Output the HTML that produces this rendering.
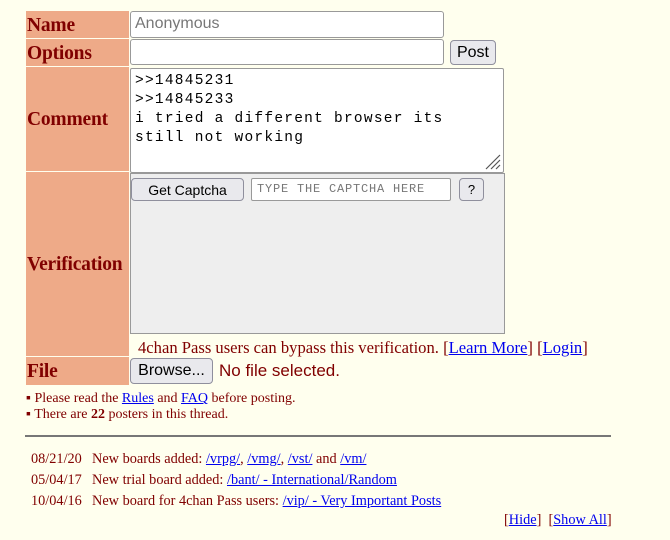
<!DOCTYPE html>
<html><head><style>
body{margin:0;width:670px;height:540px;background:#FFFFEE;position:relative;overflow:hidden;font-family:"Liberation Serif",serif;color:#800000}
.a{position:absolute}
.lbl{position:absolute;left:26px;width:103px;background:#EEAA88;font-weight:bold;font-size:19.5px;display:flex;align-items:center;padding-left:1px;padding-top:2px;box-sizing:border-box;letter-spacing:-0.2px}
.inp{position:absolute;background:#fff;border:1px solid #999;border-radius:3px;box-sizing:border-box}
.btn{position:absolute;background:#e9e9ed;border:1px solid #8f8f9d;border-radius:4px;box-sizing:border-box;font-family:"Liberation Sans",sans-serif;color:#000;display:flex;align-items:center;justify-content:center}
a{color:#0000EE;text-decoration:underline}
.mono{font-family:"Liberation Mono",monospace}
</style></head><body>
<div class="lbl" style="top:11px;height:27px">Name</div>
<div class="lbl" style="top:39px;height:27px">Options</div>
<div class="lbl" style="top:67px;height:104px">Comment</div>
<div class="lbl" style="top:172px;height:184px">Verification</div>
<div class="lbl" style="top:357px;height:28px">File</div>

<div class="inp" style="left:130px;top:11px;width:314px;height:27px"></div>
<div class="a" style="left:135px;top:15px;font-family:'Liberation Sans',sans-serif;font-size:16px;color:#777">Anonymous</div>
<div class="inp" style="left:130px;top:39px;width:314px;height:26px"></div>
<div class="btn" style="left:450px;top:40px;width:46px;height:25px;font-size:16px">Post</div>

<div class="inp" style="left:130px;top:68px;width:374px;height:105px;border-radius:2px"></div>
<div class="a mono" style="left:135px;top:72px;font-size:14.5px;letter-spacing:1.25px;line-height:19px;color:#000;white-space:pre">&gt;&gt;14845231
&gt;&gt;14845233
i tried a different browser its
still not working</div>
<svg class="a" style="left:484px;top:153px" width="18" height="18"><path d="M16 2L2 16M16 7L7 16M16 12L12 16" stroke="#555" stroke-width="1.2"/></svg>

<div class="a" style="left:130px;top:173px;width:375px;height:161px;background:#eee;border:1px solid #999;box-sizing:border-box"></div>
<div class="btn" style="left:131px;top:178px;width:113px;height:23px;font-size:14px">Get Captcha</div>
<div class="inp" style="left:251px;top:178px;width:200px;height:23px;border-radius:2px"></div>
<div class="a mono" style="left:257px;top:182px;font-size:12px;letter-spacing:0.8px;color:#777">TYPE THE CAPTCHA HERE</div>
<div class="btn" style="left:459px;top:178px;width:25px;height:23px;font-size:13px">?</div>

<div class="a" style="left:138px;top:338px;font-size:16.6px;white-space:nowrap">4chan Pass users can bypass this verification. [<a>Learn More</a>] [<a>Login</a>]</div>
<div class="btn" style="left:130px;top:358px;width:83px;height:26px;font-size:16px">Browse...</div>
<div class="a" style="left:219px;top:361px;font-family:'Liberation Sans',sans-serif;font-size:17px">No file selected.</div>

<div class="a" style="left:26px;top:391px;font-size:14px;line-height:16px;white-space:nowrap">▪ Please read the <a>Rules</a> and <a>FAQ</a> before posting.<br>▪ There are <b>22</b> posters in this thread.</div>
<div class="a" style="left:25px;top:435px;width:586px;height:2px;background:#777"></div>

<div class="a" style="left:31px;top:449px;font-size:14.3px;line-height:21px;white-space:nowrap">08/21/20<br>05/04/17<br>10/04/16</div>
<div class="a" style="left:92px;top:449px;font-size:14.3px;line-height:21px;white-space:nowrap">New boards added: <a>/vrpg/</a>, <a>/vmg/</a>, <a>/vst/</a> and <a>/vm/</a><br>New trial board added: <a>/bant/ - International/Random</a><br>New board for 4chan Pass users: <a>/vip/ - Very Important Posts</a></div>
<div class="a" style="left:504px;top:512px;font-size:14.3px;white-space:nowrap">[<a>Hide</a>] &nbsp;[<a>Show All</a>]</div>
</body></html>
